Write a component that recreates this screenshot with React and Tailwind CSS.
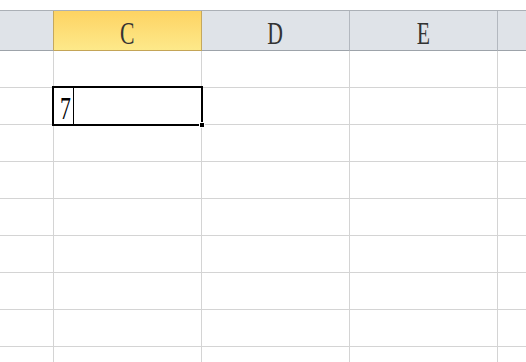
export default function App() {
  const rows = Array.from({ length: 9 });
  const serif = { fontFamily: '"Liberation Serif", "Times New Roman", serif' };
  return (
    <div className="w-[526px] h-[362px] overflow-hidden bg-white">
      <div className="h-[10px] bg-white" />
      <div className="h-px bg-[#abb0b6]" />
      <div className="grid grid-cols-[54px_148px_148px_148px_1fr] h-[40px]">
        <div className="bg-[#dfe3e8] border-b border-r border-b-[#9da3aa] border-r-[#c5a85e]" />
        <div className="bg-gradient-to-b from-[#fdd362] to-[#fde98a] border-b border-r border-b-[#c4a557] border-r-[#c5a85e] flex items-center justify-center">
          <span style={serif} className="text-[31px] leading-none text-[#333] inline-block scale-x-[0.7] pt-[6px]">C</span>
        </div>
        <div className="bg-[#dfe3e8] border-b border-r border-b-[#9da3aa] border-r-[#b3b8bf] flex items-center justify-center">
          <span style={serif} className="text-[31px] leading-none text-[#333] inline-block scale-x-[0.7] pt-[6px]">D</span>
        </div>
        <div className="bg-[#dfe3e8] border-b border-r border-b-[#9da3aa] border-r-[#b3b8bf] flex items-center justify-center">
          <span style={serif} className="text-[31px] leading-none text-[#333] inline-block scale-x-[0.7] pt-[6px]">E</span>
        </div>
        <div className="bg-[#dfe3e8] border-b border-b-[#9da3aa]" />
      </div>
      <div className="grid grid-cols-[54px_148px_148px_148px_1fr] auto-rows-[37px]">
        {rows.map((_, r) => (
          <div key={r} className="contents">
            <div className="border-b border-r border-[#d4d4d4]" />
            <div className="border-b border-r border-[#d4d4d4] relative">
              {r === 1 && (
                <div className="absolute -left-[2px] -top-[2px] w-[151px] h-[40px] border-2 border-black z-10">
                  <div className="flex h-full items-center">
                    <span style={serif} className="text-[32px] leading-none text-black inline-block scale-x-[0.68] origin-left ml-[6px] mt-[3px]">7</span>
                    <div className="w-px h-full bg-black -ml-[3px]" />
                  </div>
                  <div className="absolute -right-[4px] -bottom-[4px] w-[6px] h-[6px] bg-black border border-white" />
                </div>
              )}
            </div>
            <div className="border-b border-r border-[#d4d4d4]" />
            <div className="border-b border-r border-[#d4d4d4]" />
            <div className="border-b border-[#d4d4d4]" />
          </div>
        ))}
      </div>
    </div>
  );
}
